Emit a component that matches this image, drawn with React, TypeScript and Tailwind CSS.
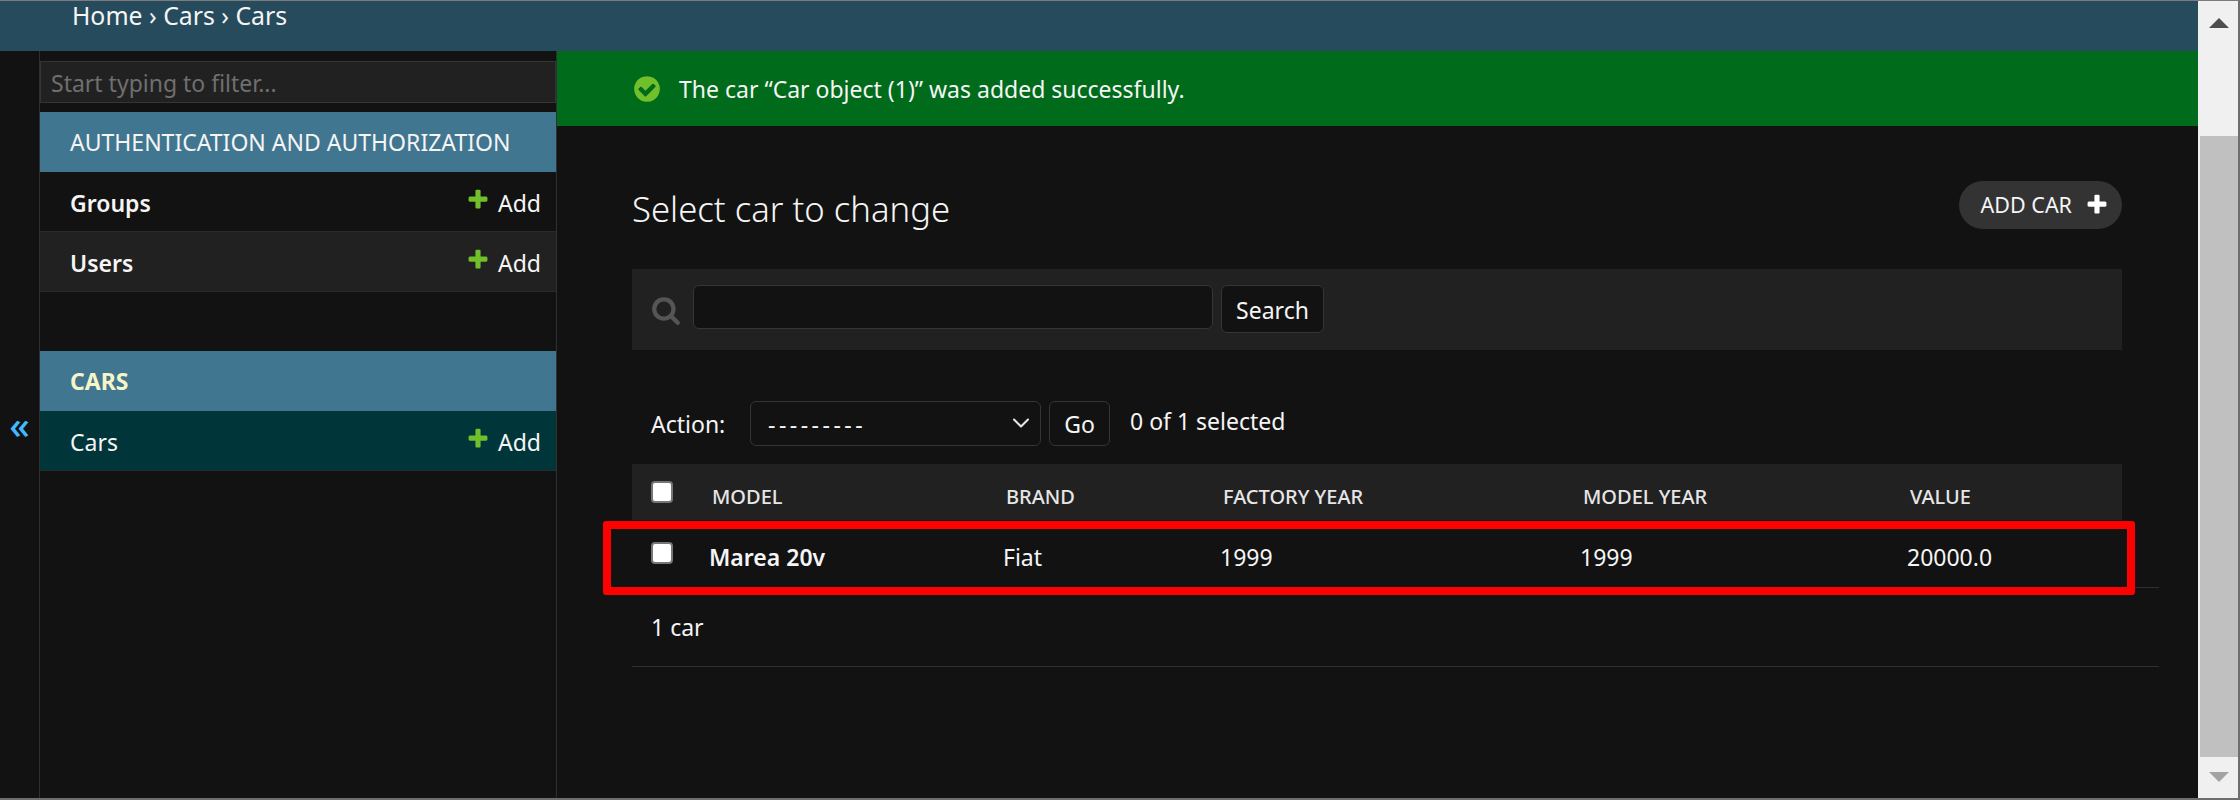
import { ChevronDown } from 'lucide-react';

const plusPath =
  'M1600 736v192q0 40-28 68t-68 28h-416v416q0 40-28 68t-68 28h-192q-40 0-68-28t-28-68v-416h-416q-40 0-68-28t-28-68v-192q0-40 28-68t68-28h416v-416q0-40 28-68t68-28h192q40 0 68 28t28 68v416h416q40 0 68 28t28 68z';

const PlusIcon = ({ className }: { className: string }) => (
  <svg viewBox="0 0 1792 1792" className={className}>
    <path fill="currentColor" d={plusPath} />
  </svg>
);

const AddLink = () => (
  <span className="flex items-center gap-[8px]">
    <PlusIcon className="w-[24px] h-[24px] text-[#70bf2b] -mt-[6px]" />
    <span className="font-normal">Add</span>
  </span>
);

const NavRow = ({ label, bg, bold = true }: { label: string; bg: string; bold?: boolean }) => (
  <div className={`flex items-center justify-between h-[60px] pl-[30px] pr-[15px] pt-[3px] border-b border-[#2a2a2a] ${bg}`}>
    <span className={bold ? 'font-semibold' : ''}>{label}</span>
    <AddLink />
  </div>
);

const Sidebar = () => (
  <div className="w-[518px] shrink-0 border-l border-r border-[#2f2f2f] pt-[10px]">
    <input
      placeholder="Start typing to filter..."
      className="w-full h-[42px] px-[10px] pt-[2px] bg-[#212121] border border-[#353535] outline-none placeholder:text-[#6f6f6f]"
    />
    <div className="mt-[9px] h-[60px] flex items-center pl-[30px] bg-[#417690]">
      AUTHENTICATION AND AUTHORIZATION
    </div>
    <NavRow label="Groups" bg="bg-[#121212]" />
    <NavRow label="Users" bg="bg-[#212121]" />
    <div className="mt-[59px] h-[60px] flex items-center pl-[30px] pt-[1px] bg-[#417690] font-bold text-[#f5f5c8]">CARS</div>
    <NavRow label="Cars" bg="bg-[#00363a]" bold={false} />
  </div>
);

const columns = [
  { title: 'MODEL', width: 'w-[294px]', value: 'Marea 20v' },
  { title: 'BRAND', width: 'w-[217px]', value: 'Fiat' },
  { title: 'FACTORY YEAR', width: 'w-[360px]', value: '1999' },
  { title: 'MODEL YEAR', width: 'w-[327px]', value: '1999' },
  { title: 'VALUE', width: 'w-[225px]', value: '20000.0' },
];

const Checkbox = () => (
  <input type="checkbox" className="block appearance-none w-[22px] h-[22px] bg-white border-2 border-[#767676] rounded-[4px]" />
);

const ResultTable = () => (
  <div className="mt-[18px] relative">
    <div className="flex h-[56px] w-[1490px] bg-[#212121] text-[20px] text-[#e6e6e6] font-medium">
      <div className="w-[67px] pl-[19px] pt-[17px]">
        <Checkbox />
      </div>
      {columns.map((col) => (
        <div key={col.title} className={`${col.width} pl-[13px] flex items-center pt-[10px]`}>
          {col.title}
        </div>
      ))}
    </div>
    <div className="flex h-[68px] border-b border-[#2f2f2f]">
      <div className="w-[67px] pl-[19px] pt-[22px]">
        <Checkbox />
      </div>
      {columns.map((col, i) => (
        <div key={col.title} className={`${col.width} pl-[10px] flex items-center pt-[8px] ${i === 0 ? 'font-semibold' : ''}`}>
          {col.value}
        </div>
      ))}
    </div>
    {/* red highlight drawn over the row */}
    <div className="absolute left-[-29px] top-[57px] w-[1532px] h-[74px] border-[8px] border-[#ff0000] rounded-[3px]" />
  </div>
);

const Content = () => (
  <div className="flex-1 flex flex-col min-w-0">
    <div className="h-[75px] flex items-center pl-[77px] gap-[19px] bg-[#006b1b]">
      <svg viewBox="0 0 1792 1792" className="w-[30px] h-[30px] -ml-[2px] -mr-[2px]">
        <path
          fill="#70bf2b"
          d="M1412 734q0-28-18-46l-91-90q-19-19-45-19t-45 19l-408 407-226-226q-19-19-45-19t-45 19l-91 90q-18 18-18 46 0 27 18 45l362 362q19 19 45 19 27 0 46-19l543-543q18-18 18-45zm252 162q0 209-103 385.500t-279.500 279.500-385.500 103-385.500-103-279.500-279.500-103-385.500 103-385.500 279.500-279.500 385.500-103 385.500 103 279.500 279.500 103 385.500z"
        />
      </svg>
      <span className="pt-[2px]">The car “Car object (1)” was added successfully.</span>
    </div>
    <div className="pl-[75px] pr-[39px]">
      <div className="w-[1490px] flex items-center justify-between mt-[55px] h-[48px]">
        <h1 className="text-[34.700px] font-light pt-[8px]">Select car to change</h1>
        <button className="flex items-center gap-[13px] h-[48px] pl-[22px] pr-[13px] rounded-full bg-[#333333] text-[21.500px]">
          ADD CAR
          <PlusIcon className="w-[24px] h-[24px] text-white" />
        </button>
      </div>

      <div className="w-[1490px] h-[81px] mt-[40px] bg-[#212121] flex items-start pt-[16px] pl-[20px]">
        <svg viewBox="0 0 1792 1792" className="w-[30px] h-[30px] mt-[10px] -ml-[1px]">
          <path
            fill="#555555"
            d="M1216 832q0-185-131.500-316.500t-316.500-131.500-316.500 131.500-131.500 316.500 131.500 316.500 316.500 131.500 316.500-131.500 131.500-316.500zm512 832q0 52-38 90t-90 38q-54 0-90-38l-343-342q-179 124-399 124-143 0-273.500-55.500t-225-150-150-225-55.500-273.500 55.500-273.500 150-225 225-150 273.500-55.500 273.500 55.500 225 150 150 225 55.500 273.500q0 220-124 399l343 343q37 37 37 90z"
          />
        </svg>
        <input className="ml-[12px] w-[520px] h-[44px] bg-[#121212] border border-[#353535] rounded-[6px] outline-none" />
        <button className="ml-[8px] w-[103px] h-[48px] pt-[2px] bg-[#121212] border border-[#353535] rounded-[6px]">Search</button>
      </div>

      <div className="mt-[51px] h-[45px] flex items-center pl-[19px]">
        <span className="w-[99px] pt-[2px]">Action:</span>
        <div className="relative w-[291px] h-[45px]">
          <select className="appearance-none w-full h-full pl-[17px] pt-[2px] bg-[#121212] border border-[#353535] rounded-[6px] outline-none tracking-[3.500px]">
            <option>---------</option>
          </select>
          <ChevronDown className="absolute right-[6px] top-[8px] w-[28px] h-[28px] text-[#e6e6e6] pointer-events-none" strokeWidth={1.75} />
        </div>
        <button className="ml-[8px] w-[61px] h-[45px] pt-[2px] bg-[#121212] border border-[#353535] rounded-[6px]">Go</button>
        <span className="ml-[20px] -mt-[4px]">0 of 1 selected</span>
      </div>

      <ResultTable />

      <div className="h-[79px] pl-[19px] flex items-center border-b border-[#2f2f2f]">1 car</div>
    </div>
  </div>
);

const Scrollbar = () => (
  <div className="w-[40px] shrink-0 flex flex-col bg-[#f0f0f0]">
    <div className="h-[135px] flex justify-center pt-[17px] pl-[2px]">
      <div className="w-0 h-0 border-x-[10px] border-x-transparent border-b-[10px] border-b-[#4d4d4d]" />
    </div>
    <div className="flex-1 ml-[2px] bg-[#c0c0c0]" />
    <div className="h-[41px] flex justify-center pt-[15px] pl-[2px]">
      <div className="w-0 h-0 border-x-[10px] border-x-transparent border-t-[10px] border-t-[#a3a3a3]" />
    </div>
  </div>
);

export default function App() {
  return (
    <div className="w-[2240px] h-[800px] flex overflow-hidden bg-[#121212] text-[#f5f5f5] text-[23px] border-t border-t-[#7e7a7e] border-r-2 border-r-[#6e6e6e] border-b-2 border-b-[#6e6e6e] font-['Noto_Sans','Open_Sans',sans-serif]">
      <div className="flex-1 flex flex-col min-w-0">
        <div className="h-[50px] shrink-0 bg-[#264b5d] pl-[72px] text-[24.800px] leading-[28px]">Home › Cars › Cars</div>
        <div className="flex-1 flex min-h-0">
          <div className="w-[39px] shrink-0 flex items-start justify-center pt-[354px]">
            <span className="text-[#44b8ff] text-[38px] font-medium leading-none">«</span>
          </div>
          <Sidebar />
          <Content />
        </div>
      </div>
      <Scrollbar />
    </div>
  );
}
